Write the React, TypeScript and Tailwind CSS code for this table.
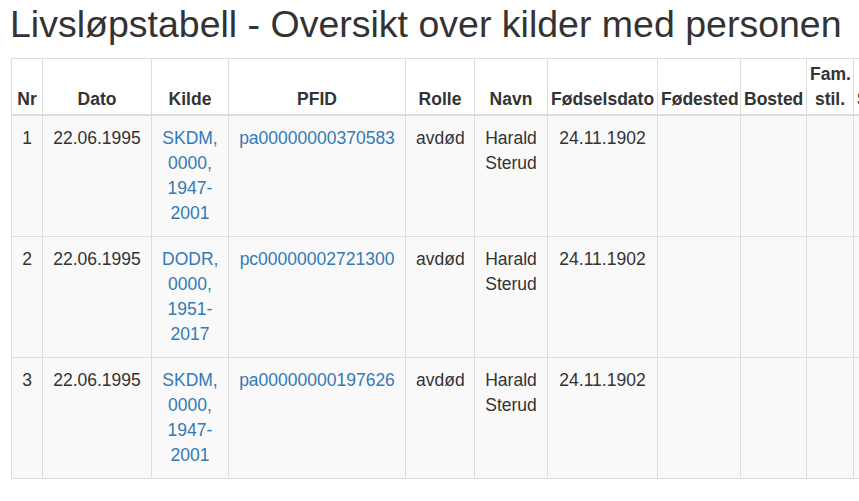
import React from 'react';

interface Entry {
  nr: number;
  dato: string;
  kilde: string;
  pfid: string;
  rolle: string;
  navn: string;
  fodselsdato: string;
}

const entries: Entry[] = [
  { nr: 1, dato: '22.06.1995', kilde: 'SKDM, 0000, 1947-2001', pfid: 'pa00000000370583', rolle: 'avdød', navn: 'Harald Sterud', fodselsdato: '24.11.1902' },
  { nr: 2, dato: '22.06.1995', kilde: 'DODR, 0000, 1951-2017', pfid: 'pc00000002721300', rolle: 'avdød', navn: 'Harald Sterud', fodselsdato: '24.11.1902' },
  { nr: 3, dato: '22.06.1995', kilde: 'SKDM, 0000, 1947-2001', pfid: 'pa00000000197626', rolle: 'avdød', navn: 'Harald Sterud', fodselsdato: '24.11.1902' },
];

const th = 'border border-[#ddd] border-b-2 px-[3px] pt-[3px] pb-[2px] align-bottom font-bold text-center';
const td = 'border border-[#ddd] px-[10px] py-[10px] align-top text-center';

export default function App() {
  return (
    <div
      className="w-[859px] h-[501px] overflow-hidden bg-white text-[#333] pl-[10px]"
      style={{ fontFamily: '"Liberation Sans", Arial, sans-serif' }}
    >
      <h2 className="mt-[4px] mb-[13px] text-[37.5px] leading-[41px] font-normal whitespace-nowrap">
        Livsløpstabell - Oversikt over kilder med personen
      </h2>
      <table className="ml-px border-collapse table-fixed w-[960px] text-[17.5px] leading-[25px]">
        <colgroup>
          <col className="w-[31px]" />
          <col className="w-[109px]" />
          <col className="w-[77px]" />
          <col className="w-[177px]" />
          <col className="w-[69px]" />
          <col className="w-[73px]" />
          <col className="w-[110px]" />
          <col className="w-[83px]" />
          <col className="w-[66px]" />
          <col className="w-[47px]" />
          <col className="w-[118px]" />
        </colgroup>
        <thead>
          <tr className="bg-white">
            <th className={th}>Nr</th>
            <th className={th}>Dato</th>
            <th className={th}>Kilde</th>
            <th className={th}>PFID</th>
            <th className={th}>Rolle</th>
            <th className={th}>Navn</th>
            <th className={th}>Fødselsdato</th>
            <th className={th}>Fødested</th>
            <th className={th}>Bosted</th>
            <th className={th}>
              Fam.
              <br />
              stil.
            </th>
            <th className={th + ' !text-left'}>Sivilstand</th>
          </tr>
        </thead>
        <tbody>
          {entries.map((e) => (
            <tr key={e.nr} className="bg-[#f9f9f9]">
              <td className={td}>{e.nr}</td>
              <td className={td}>{e.dato}</td>
              <td className={td}>
                <a className="text-[#337ab7]" href="#">{e.kilde}</a>
              </td>
              <td className={td}>
                <a className="text-[#337ab7]" href="#">{e.pfid}</a>
              </td>
              <td className={td}>{e.rolle}</td>
              <td className={td}>{e.navn}</td>
              <td className={td}>{e.fodselsdato}</td>
              <td className={td}></td>
              <td className={td}></td>
              <td className={td}></td>
              <td className={td}></td>
            </tr>
          ))}
        </tbody>
      </table>
    </div>
  );
}
